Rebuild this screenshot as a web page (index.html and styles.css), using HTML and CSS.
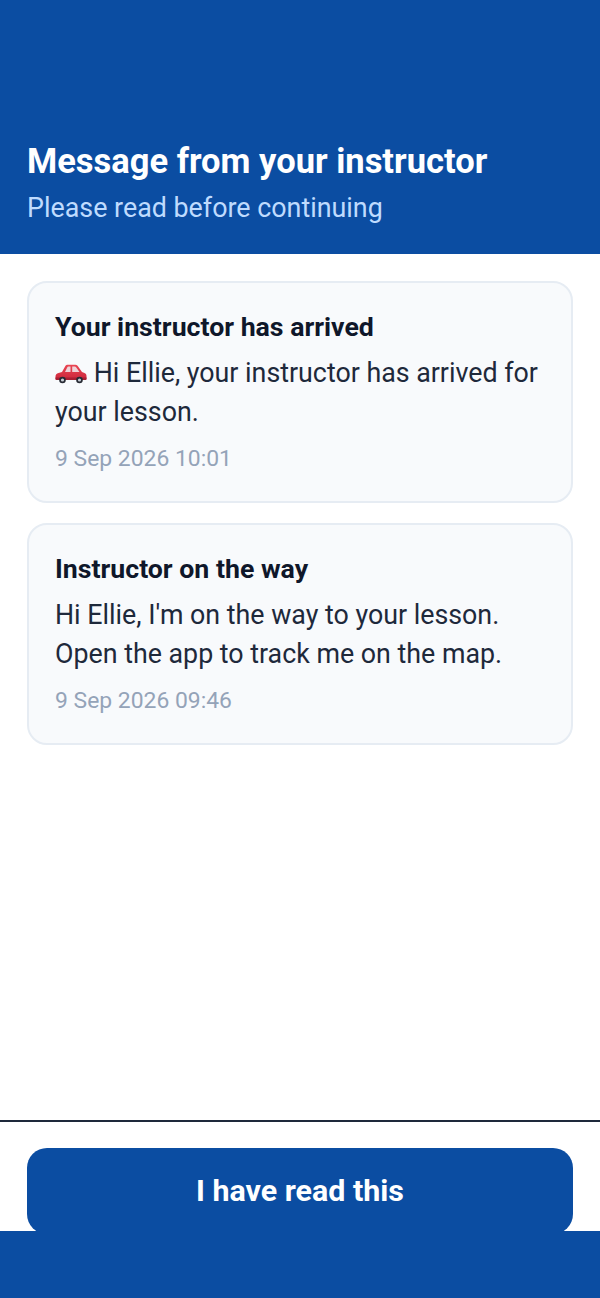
FILE: index.html
```html
<!DOCTYPE html>
<html lang="en">
<head>
  <meta charset="UTF-8" />
  <meta name="viewport" content="width=device-width, initial-scale=1.0"/>
  <title>Message from your instructor</title>
  <link rel="stylesheet" href="styles.css">
</head>
<body>
  <div class="page">
    <header class="header">
      <h1>Message from your instructor</h1>
      <p>Please read before continuing</p>
    </header>

    <main class="messages">
      <div class="card">
        <h2>Your instructor has arrived</h2>
        <p class="text"><svg class="car" viewBox="0 0 32 20" aria-hidden="true">
          <defs>
            <linearGradient id="carBody" x1="0" y1="0" x2="0" y2="1">
              <stop offset="0" stop-color="#ea4653"/>
              <stop offset="1" stop-color="#cc263b"/>
            </linearGradient>
          </defs>
          <path d="M.5 12.500c0-2 1-3.200 3-3.600L7 8l3.500-6.200Q11.100.8 12.400.8h8q1.300 0 2.200 1L27 8l2.500.9q2 .8 2 2.800v3q0 1.300-1.300 1.300H1.800q-1.300 0-1.300-1.300z" fill="url(#carBody)"/>
          <path d="M10 8l2.300-4.700q.4-.7 1.100-.7h2.100V8zM17.200 2.600h2.600q.8 0 1.300.7L24.500 8h-7.300z" fill="#efd3d8"/>
          <path d="M.5 13.500h31v1.200q0 1.300-1.300 1.300H1.800q-1.300 0-1.300-1.300z" fill="#a81f33"/>
          <circle cx="7.500" cy="16" r="3.300" fill="#262a33"/>
          <circle cx="7.500" cy="16" r="1.600" fill="#c9ced6"/>
          <circle cx="24.500" cy="16" r="3.300" fill="#262a33"/>
          <circle cx="24.500" cy="16" r="1.600" fill="#c9ced6"/>
        </svg> Hi Ellie, your instructor has arrived for your lesson.</p>
        <div class="time">9 Sep 2026 10:01</div>
      </div>
      <div class="card">
        <h2>Instructor on the way</h2>
        <p class="text">Hi Ellie, I'm on the way to your lesson. Open the app to track me on the map.</p>
        <div class="time">9 Sep 2026 09:46</div>
      </div>
    </main>

    <footer class="footer">
      <button class="read-btn">I have read this</button>
    </footer>
    <div class="bottom-bar"></div>
  </div>
</body>
</html>
```

FILE: styles.css
```css
* { box-sizing: border-box; }
body {
  font-family: Roboto, sans-serif;
  background-color: #fff;
  margin: 0;
}
.page {
  display: flex; flex-direction: column;
  height: 1298px;
}
.header {
  height: 254px;
  padding: 140px 27px 0;
  background-color: #0b4da2;
}
.header h1 {
  margin: 0;
  font-size: 34.5px; line-height: 42px; font-weight: 700;
  color: #fff;
}
.header p {
  margin: 9px 0 0;
  font-size: 26.85px; line-height: 34px;
  color: #bfdbfe;
}
.messages {
  flex: 1;
  display: flex; flex-direction: column; gap: 20px;
  padding: 27px 27px 0;
}
.card {
  height: 222px;
  padding: 26px 26px;
  background-color: #f8fafc;
  border: 2px solid #e6ecf3;
  border-radius: 20px;
}
.card h2 {
  margin: 0;
  font-size: 26.7px; line-height: 36px; font-weight: 700;
  color: #0f172a;
}
.text {
  margin: 9px 0 0;
  font-size: 26.8px; line-height: 38.5px;
  color: #1e293b;
}
.car {
  width: 32px; height: 20px;
  vertical-align: -2px;
}
.time {
  margin-top: 12px;
  font-size: 22.9px; line-height: 32px;
  color: #94a3b8;
}
.footer {
  padding: 26px 27px 0;
  border-top: 2px solid #1e293b;
}
.read-btn {
  display: block; width: 100%; height: 86px;
  padding: 0 0 2px;
  border: none; border-radius: 20px;
  background-color: #0b4da2;
  font-family: inherit; font-size: 30.4px; font-weight: 700;
  color: #fff;
}
.bottom-bar {
  height: 67px;
  margin-top: -3px;
  background-color: #0b4da2;
}
```
